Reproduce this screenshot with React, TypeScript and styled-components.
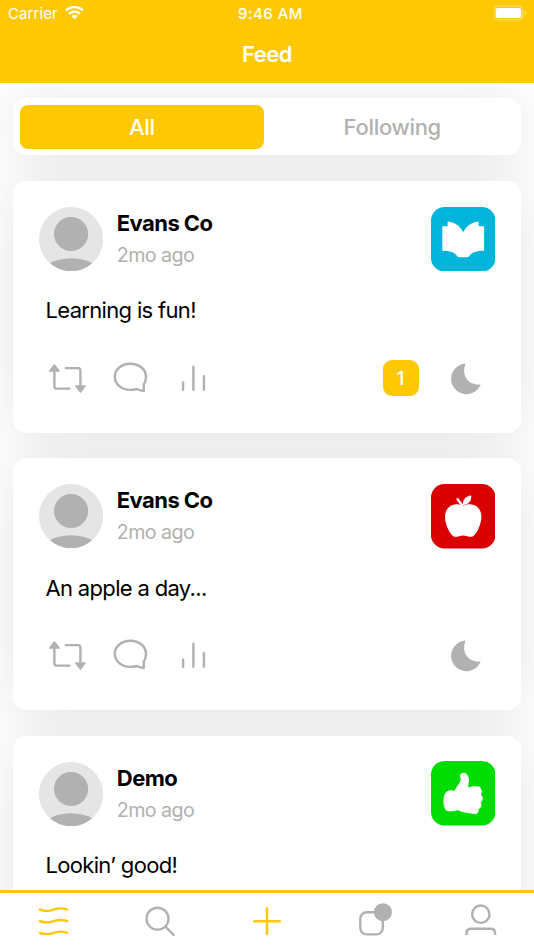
import React from "react";
import styled, { createGlobalStyle } from "styled-components";

const YELLOW = "#ffc804";
const GRAY = "#b1b1b1";

const GlobalStyle = createGlobalStyle`
  * { box-sizing: border-box; }
  body { margin: 0; background: #fff; }
`;

const Screen = styled.div`
  display: flex;
  flex-direction: column;
  width: 534px;
  height: 950px;
  overflow: hidden;
  background: #fff;
  color: #000;
  font-family: Inter, "Liberation Sans", sans-serif;
`;

const Header = styled.header`
  flex: none;
  height: 82.7px;
  background: ${YELLOW};
  color: #fff;
`;

const StatusBar = styled.div`
  display: grid;
  grid-template-columns: 1fr auto 1fr;
  align-items: center;
  height: 27.5px;
  padding: 0 6px 0 8px;
  font-size: 15px;
`;

const Carrier = styled.div`
  display: flex;
  align-items: center;
  gap: 7px;
  letter-spacing: 0.1px;
`;

const Clock = styled.div`
  padding-left: 5px;
  font-weight: 500;
  letter-spacing: 0.45px;
`;

const Battery = styled.svg`
  justify-self: end;
  margin-top: -1px;
`;

const Title = styled.h1`
  margin: 0;
  text-align: center;
  font-size: 22px;
  font-weight: 600;
  line-height: 53px;
  letter-spacing: -0.45px;
`;

const Feed = styled.main`
  position: relative;
  z-index: 0;
  flex: 1;
  min-height: 0;
  overflow: hidden;
  display: flex;
  flex-direction: column;
  gap: 25.7px;
  padding: 15.3px 13px 0;
`;

const Panel = styled.section`
  flex: none;
  position: relative;
  border-radius: 14px;
  background: #fff;

  &::before {
    content: "";
    position: absolute;
    inset: 0;
    z-index: -1;
    border-radius: inherit;
    box-shadow: 0 3px 57px rgba(0, 0, 0, 0.105);
  }
`;

const Segments = styled(Panel)`
  display: flex;
  gap: 6.3px;
  height: 57.3px;
  padding: 6.7px;
`;

const Segment = styled.button<{ $active?: boolean }>`
  flex: 1;
  padding: 0;
  border: 0;
  border-radius: 8px;
  background: ${(p) => (p.$active ? YELLOW : "transparent")};
  color: ${(p) => (p.$active ? "#fff" : GRAY)};
  font: 550 22px/44px Inter, sans-serif;
  letter-spacing: -0.3px;
`;

const Card = styled(Panel)`
  height: 251.7px;
  padding: 25.7px 26px 0;
`;

const CardHead = styled.div`
  display: flex;
  align-items: center;
  gap: 13.5px;
  height: 64.5px;
`;

const Byline = styled.div`
  flex: 1;
  padding-top: 1.4px;
`;

const Author = styled.div`
  font-size: 22px;
  font-weight: 700;
  line-height: 32px;
  letter-spacing: -0.55px;
`;

const Age = styled.div`
  color: ${GRAY};
  font-size: 19.7px;
  line-height: 33px;
  letter-spacing: -0.6px;
`;

const Message = styled.p`
  margin: 25px 0 0 6.5px;
  font-size: 22px;
  line-height: 28px;
  letter-spacing: -0.67px;
`;

const Actions = styled.div`
  display: flex;
  align-items: center;
  gap: 23px;
  height: 36px;
  margin-top: 35.9px;
  padding: 0 15px 0 8px;
`;

const Reactions = styled.div`
  display: flex;
  align-items: center;
  gap: 32px;
  margin-left: auto;
`;

const Count = styled.span`
  width: 36px;
  height: 36px;
  border-radius: 9px;
  background: ${YELLOW};
  color: #fff;
  text-align: center;
  font-size: 19px;
  font-weight: 550;
  line-height: 37px;
`;

const TabBar = styled.nav`
  flex: none;
  display: grid;
  grid-template-columns: repeat(5, 1fr);
  justify-items: center;
  height: 60px;
  padding-top: 10px;
  border-top: 3px solid ${YELLOW};
  background: #fff;
`;

const LineIcon = styled.svg<{ $color?: string }>`
  display: block;
  fill: none;
  stroke: ${(p) => p.$color ?? GRAY};
  stroke-width: 2.4px;
  stroke-linecap: round;
  stroke-linejoin: round;
`;

const MoonIcon = styled.svg`
  display: block;
  overflow: visible;
  fill: ${GRAY};
`;

const Wifi = () => (
  <svg width="19" height="15" viewBox="0 0.6 19 15" fill="none" stroke="#fff" strokeWidth="2.3">
    <path d="M.9 5.1c4.9-4.7 12.3-4.7 17.2 0" />
    <path d="M4 8.4c3.2-3.1 7.8-3.1 11 0" />
    <path d="M6.3 10.7c1.9-1.8 4.5-1.8 6.4 0L9.5 13.8Z" fill="#fff" stroke="none" />
  </svg>
);

const BatteryIcon = () => (
  <Battery width="34" height="16" viewBox="0 0 34 16" fill="none">
    <rect x="0" y="1.2" width="29" height="13.6" rx="4" stroke="#fff" strokeOpacity=".4" strokeWidth="1.2" />
    <rect x="1.7" y="3" width="25.6" height="10" rx="2.2" fill="#fff" />
    <path d="M30.8 5.8c1.9.5 1.9 3.9 0 4.4Z" fill="#fff" fillOpacity=".45" />
  </Battery>
);

const Avatar = () => (
  <svg width="64.3" height="64.3" viewBox="0 0 64.3 64.3">
    <clipPath id="avatar-circle">
      <circle cx="32.1" cy="32.1" r="32.1" />
    </clipPath>
    <g clipPath="url(#avatar-circle)">
      <rect width="64.3" height="64.3" fill="#e5e5e5" />
      <circle cx="32.1" cy="27" r="17.1" fill={GRAY} />
      <ellipse cx="32.1" cy="71.3" rx="32" ry="20" fill={GRAY} />
    </g>
  </svg>
);

const Repost = () => (
  <LineIcon width="40" height="36" viewBox="0 0 40 36">
    <path d="M7.4 10V26.4q0 2.2 2.2 2.2H22.4M18.8 8.1H31.2q2.2 0 2.2 2.2V27" />
    <path d="M7.4 5 12 11H2.8ZM33.4 32 28.8 26H38Z" fill={GRAY} strokeWidth="1.6" />
  </LineIcon>
);

const Comment = () => (
  <LineIcon width="40" height="36" viewBox="0 0 40 36">
    <path d="M20.4 3.7C11.5 3.7 4.8 9.5 4.8 16.8S11.5 29.9 20.4 29.9c2.2 0 4-.2 6.1-.9 2.4 1 4.6 1.8 7.3 2V24.5C35.2 22.4 36 19.6 36 16.8 36 9.5 29.3 3.7 20.4 3.7Z" />
  </LineIcon>
);

const Stats = () => (
  <LineIcon width="40" height="36" viewBox="0 0 40 36">
    <path d="M10.1 22.5V29.8M20.4 6.8V29.8M30.9 16.1V29.8" />
  </LineIcon>
);

const Moon = () => (
  <MoonIcon width="29.5" height="31" viewBox="0 0 29.5 31">
    <path d="M13.7.5C14.3.3 14.5.8 14.3 1.2 10.4 12.8 17.2 22.1 28.6 21.4 29.4 21.3 29.7 21.7 29.4 22.3A15.4 15.4 0 1 1 13.7.5Z" />
  </MoonIcon>
);

type IconName = "book" | "apple" | "thumb";

const tiles: Record<IconName, { color: string; art: React.ReactNode }> = {
  book: {
    color: "#00b4dc",
    art: (
      <path d="M12 19.2H16.6V15.4q0-.9 1-.8C24 15.5 29.5 19.7 32.2 25.3 34.9 19.7 40.5 15.5 46.9 14.6q.8 0 .8.8V19.2H52.3q.8 0 .8.8V43.7C45.4 43.6 40.8 45.1 38.2 49.2q-.7 1-1.8 1H28q-1.1 0-1.8-1C23.6 45.1 19 43.6 11.3 43.7V20q0-.8.7-.8Z" />
    ),
  },
  apple: {
    color: "#db0000",
    art: (
      <>
        <path d="M32 21.9C28.7 20.2 24.8 19.7 21.5 21 16.6 22.8 14 27.4 14 32.6 14 39.8 18 49 22.3 52.2 25.3 54 28.3 51.4 32.2 51.4S39.1 54 42.1 52.2C46.4 49 50.4 39.8 50.4 32.6 50.4 27.4 47.8 22.8 42.9 21 39.6 19.7 35.3 20.2 32 21.9Z" />
        <path d="M32 21.1C31.4 15.7 34.6 12 40.2 11.5 40.8 16.8 37.7 20.6 32 21.1Z" />
        <path d="M26.6 15.3 31.3 21.5" stroke="#fff" strokeWidth="2.4" strokeLinecap="round" />
      </>
    ),
  },
  thumb: {
    color: "#00dc00",
    art: (
      <path d="M32.2 11.7C29.5 11.8 28.5 14 29.3 16.4 31.3 20.8 25.2 25 23.4 29.8 18.2 28.2 14.8 29.8 13.2 34.6 11.7 40 12.4 45.5 14.7 49 17.5 51.3 23.5 50.4 26.7 49 30 51.5 37.7 51.9 42.3 53 46.2 53.7 48.4 51 47.6 48 50.6 46.6 51.2 43.6 49.6 41.4 52.4 39.4 52.6 36 49.9 33.8 51.4 31.4 51.1 28.8 49.6 27.6 51 24.4 42 24.8 37.2 26.4 37.2 22.4 39.2 19.6 37.1 15.2 36 13 34.6 11.5 32.2 11.7Z" />
    ),
  },
};

const Tile = ({ name }: { name: IconName }) => (
  <svg width="64.5" height="64.5" viewBox="0 0 64.5 64.5">
    <rect width="64.5" height="64.5" rx="13.5" fill={tiles[name].color} />
    <g fill="#fff">{tiles[name].art}</g>
  </svg>
);

type Post = { author: string; text: string; icon: IconName; count?: number };

const posts: Post[] = [
  { author: "Evans Co", text: "Learning is fun!", icon: "book", count: 1 },
  { author: "Evans Co", text: "An apple a day...", icon: "apple" },
  { author: "Demo", text: "Lookin’ good!", icon: "thumb" },
];

const PostCard = ({ author, text, icon, count }: Post) => (
  <Card>
    <CardHead>
      <Avatar />
      <Byline>
        <Author>{author}</Author>
        <Age>2mo ago</Age>
      </Byline>
      <Tile name={icon} />
    </CardHead>
    <Message>{text}</Message>
    <Actions>
      <Repost />
      <Comment />
      <Stats />
      <Reactions>
        {count !== undefined && <Count>{count}</Count>}
        <Moon />
      </Reactions>
    </Actions>
  </Card>
);

const wave = "c4.6 1.8 8.4 1.8 13.8 0s9.2-1.8 13.4 0";

export default function App() {
  return (
    <Screen>
      <GlobalStyle />
      <Header>
        <StatusBar>
          <Carrier>
            Carrier
            <Wifi />
          </Carrier>
          <Clock>9:46 AM</Clock>
          <BatteryIcon />
        </StatusBar>
        <Title>Feed</Title>
      </Header>
      <Feed>
        <Segments>
          <Segment $active>All</Segment>
          <Segment>Following</Segment>
        </Segments>
        {posts.map((post) => (
          <PostCard key={post.text} {...post} />
        ))}
      </Feed>
      <TabBar>
        <LineIcon width="36" height="36" viewBox="0 0 36 36" $color={YELLOW}>
          <path d={`M4.9 6.6${wave}M4.9 18.2${wave}M4.9 29.9${wave}`} />
        </LineIcon>
        <LineIcon width="36" height="36" viewBox="0 0 36 36">
          <circle cx="15.5" cy="15.7" r="11" />
          <path d="M23.4 23.7 31.6 31.8" />
        </LineIcon>
        <LineIcon width="36" height="36" viewBox="0 0 36 36" $color={YELLOW}>
          <path d="M5.2 18.3H30.8M18 5.5V31.1" />
        </LineIcon>
        <LineIcon width="36" height="36" viewBox="0 0 36 36">
          <rect x="4.3" y="9.2" width="22.5" height="22.2" rx="6.5" />
          <circle cx="26.9" cy="9.2" r="9" fill={GRAY} stroke="none" />
        </LineIcon>
        <LineIcon width="36" height="36" viewBox="0 0 36 36">
          <circle cx="17.8" cy="11.2" r="8.7" />
          <path d="M3.5 32V30.4q0-4.7 4.7-4.7H27.4q4.7 0 4.7 4.7V32" strokeLinecap="butt" />
        </LineIcon>
      </TabBar>
    </Screen>
  );
}
